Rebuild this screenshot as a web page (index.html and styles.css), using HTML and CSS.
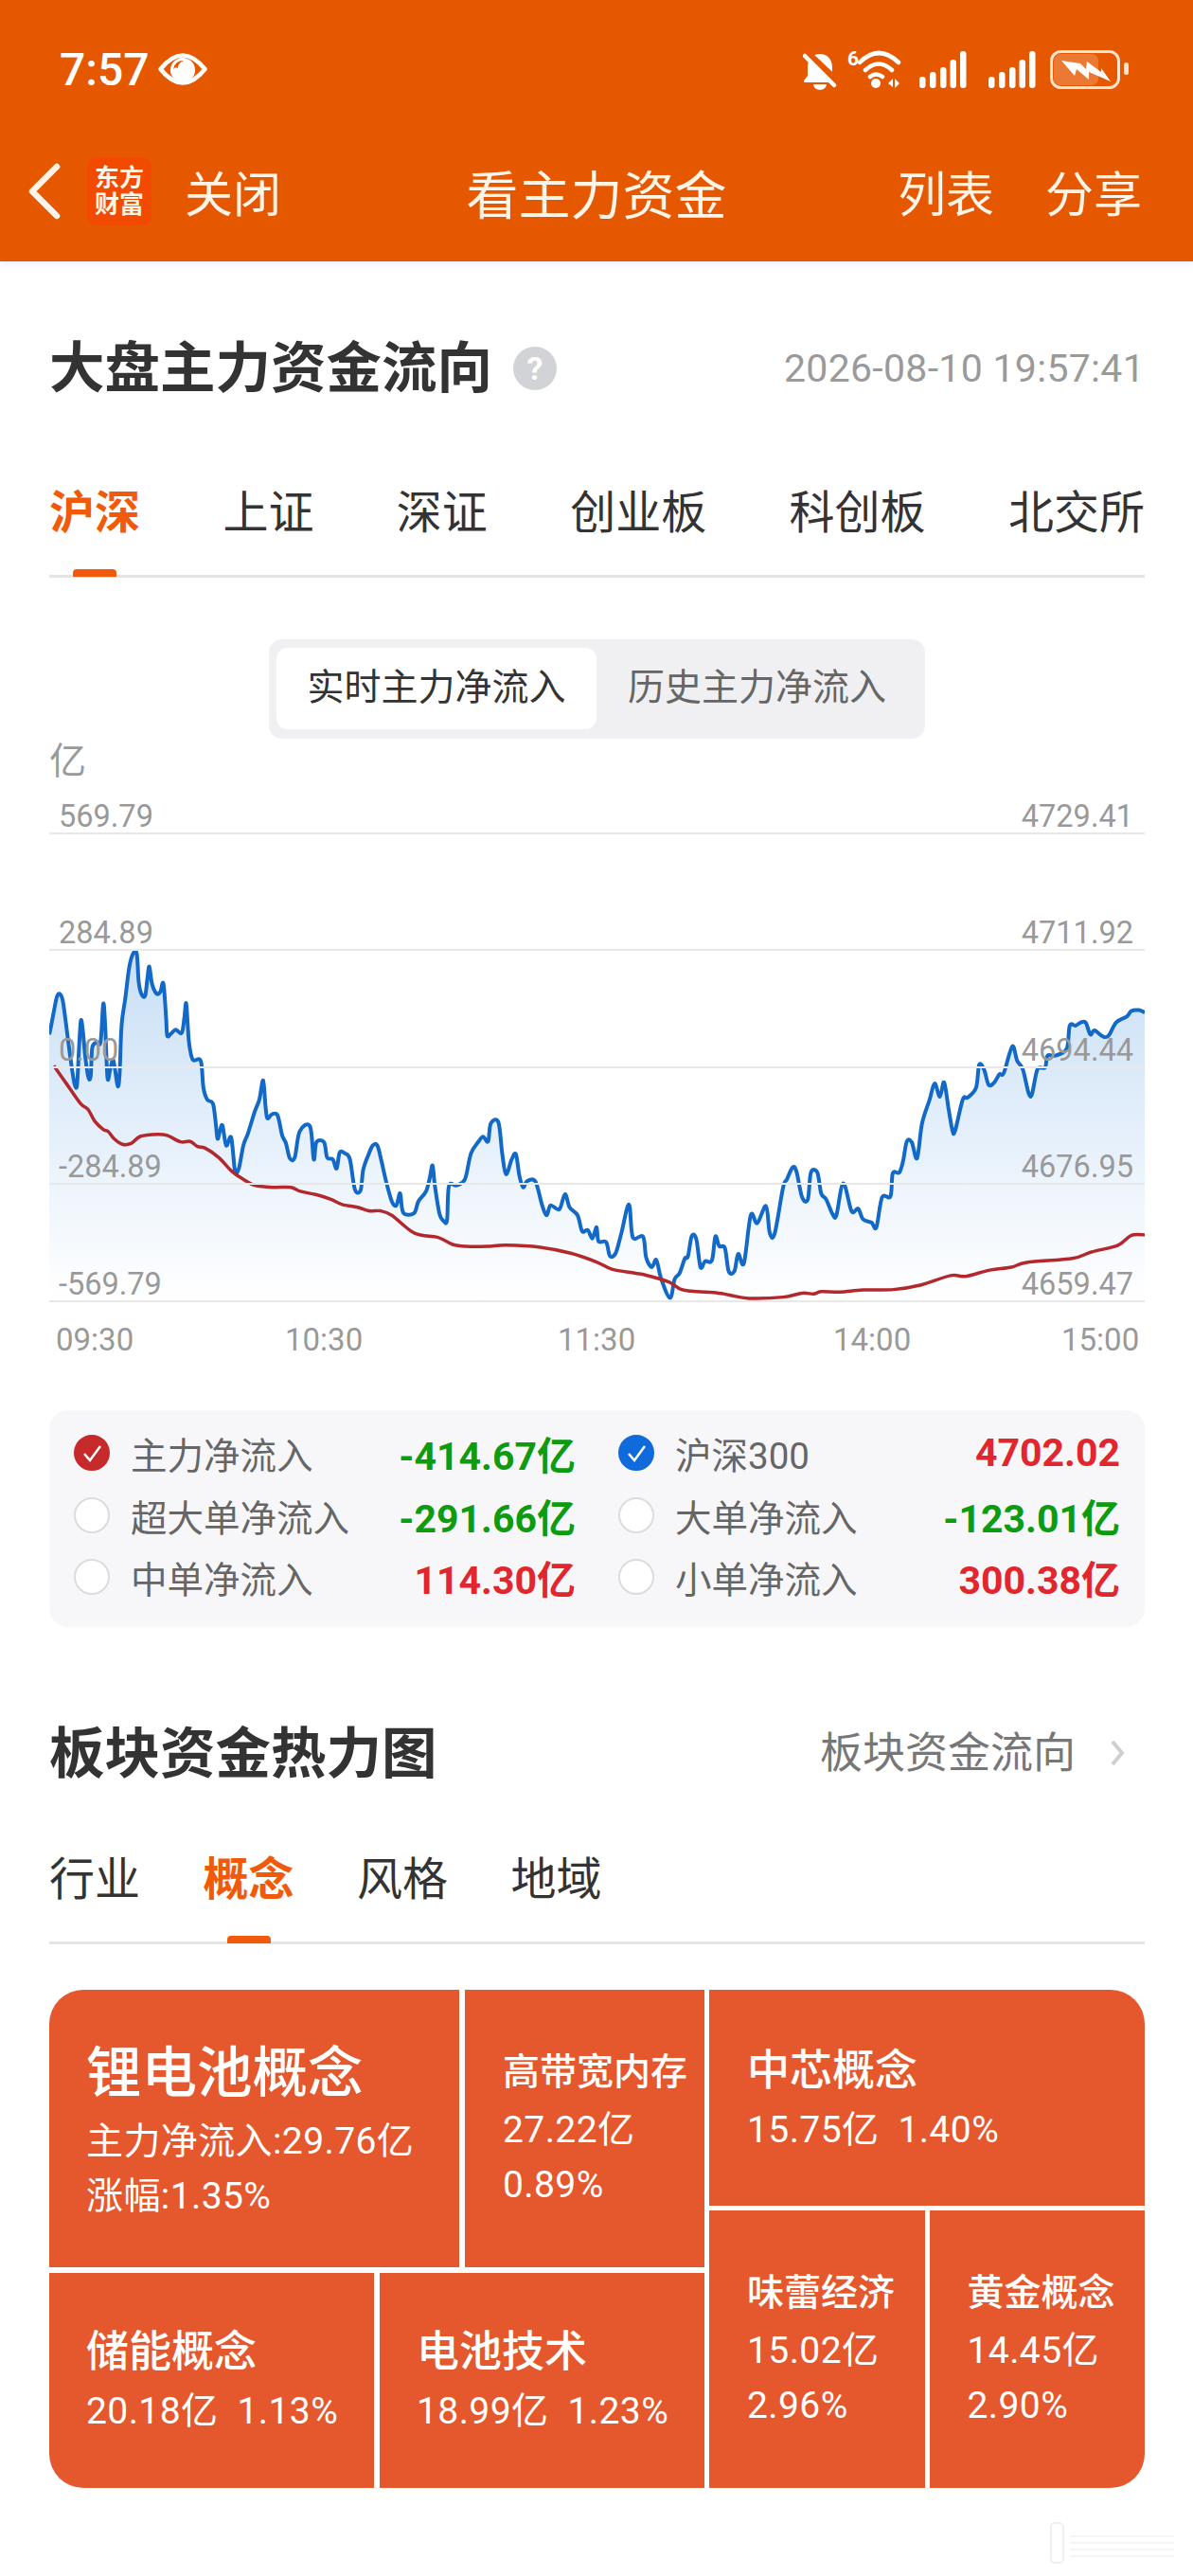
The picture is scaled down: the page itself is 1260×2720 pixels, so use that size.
FILE: index.html
```html
<!DOCTYPE html>
<html lang="zh-CN">
<head>
    <meta charset="UTF-8">
    <meta name="viewport" content="width=device-width, initial-scale=1.0">
    <title>看主力资金</title>
    <link rel="stylesheet" href="styles.css">
</head>
<body>
    <header class="header">
        <div class="status-bar">
            <span class="clock">7:57</span>
            <svg class="eye" viewBox="168 54 52 36">
                <path d="M170.500 72Q194 43 217.500 72Q194 101 170.500 72Z" fill="none" stroke="#fff" stroke-width="4.500" stroke-linejoin="round"/>
                <circle cx="194" cy="73" r="13" fill="#fff"/>
                <path d="M184 72a10 10 0 0 1 11-9c-4 2-6 4-6 8c-2-1-3-1-5 1z" fill="#e65800"/>
            </svg>
            <svg class="status-icons" viewBox="848 50 344 45">
                <path d="M866 56c-8 0-13 6-13 14v9l-4 5v2h34v-2l-4-5v-9c0-8-5-14-13-14z" fill="#fff"/>
                <path d="M859 88a7 6 0 0 0 14 0z" fill="#fff"/>
                <line x1="851" y1="54" x2="885" y2="86" stroke="#e65800" stroke-width="8"/>
                <line x1="850" y1="58" x2="881" y2="89" stroke="#fff" stroke-width="4.500" stroke-linecap="round"/>
                <text x="895" y="68" class="wifi-six">6</text>
                <path d="M908 65Q928 45 949 65M914 73Q928 60 942 73M919 80Q925 75 932 80" fill="none" stroke="#fff" stroke-width="4.500" stroke-linecap="round"/>
                <circle cx="925" cy="87" r="5" fill="#fff"/>
                <path d="M938 87l5-5v9zM945 82l5 5l-5 5z" fill="#fff"/>
                <rect x="971" y="80" width="6.500" height="12" rx="3" fill="#fff"/>
                <rect x="982" y="75" width="6.500" height="17" rx="3" fill="#fff"/>
                <rect x="993" y="70" width="6.500" height="22" rx="3" fill="#fff"/>
                <rect x="1003.500" y="62" width="6.500" height="30" rx="3" fill="#fff"/>
                <rect x="1014" y="53" width="6.500" height="39" rx="3" fill="#fff"/>
                <rect x="1044" y="80" width="6.500" height="12" rx="3" fill="#fff"/>
                <rect x="1055" y="75" width="6.500" height="17" rx="3" fill="#fff"/>
                <rect x="1066" y="70" width="6.500" height="22" rx="3" fill="#fff"/>
                <rect x="1076.500" y="62" width="6.500" height="30" rx="3" fill="#fff"/>
                <rect x="1087" y="53" width="6.500" height="39" rx="3" fill="#fff"/>
                <rect x="1113" y="56" width="47" height="33" rx="7" fill="#fff" opacity="0.2"/>
                <rect x="1110.500" y="53.500" width="71" height="38" rx="10" fill="none" stroke="#ffe3cc" stroke-width="3"/>
                <rect x="1187" y="65" width="5" height="13" rx="2.500" fill="#ffe3cc"/>
                <path d="M1121 63l20 3l6 6l1-8l15 11l0-4l10 14l-23-10l0 8l-13-11l-2 7z" fill="#fff"/>
            </svg>
        </div>
        <nav class="nav-bar">
            <div class="nav-left">
                <svg class="back" viewBox="0 0 40 64"><polyline points="33,6 7,32 33,58" fill="none" stroke="#fff4e8" stroke-width="6.500" stroke-linecap="round" stroke-linejoin="round"/></svg>
                <div class="app-logo"><span>东方</span><span>财富</span></div>
                <span>关闭</span>
            </div>
            <div class="nav-title">看主力资金</div>
            <div class="nav-right">
                <span>列表</span>
                <span>分享</span>
            </div>
        </nav>
    </header>

    <main class="page">
        <div class="section-head first">
            <div class="title-wrap">
                <h1 class="section-title">大盘主力资金流向</h1>
                <span class="help">?</span>
            </div>
            <span class="update-time">2026-08-10 19:57:41</span>
        </div>

        <div class="tabs spread">
            <span class="tab active">沪深</span>
            <span class="tab">上证</span>
            <span class="tab">深证</span>
            <span class="tab">创业板</span>
            <span class="tab">科创板</span>
            <span class="tab">北交所</span>
        </div>

        <div class="segment">
            <span class="segment-item active">实时主力净流入</span>
            <span class="segment-item">历史主力净流入</span>
        </div>

        <div class="unit">亿</div>
        <div class="chart">
            <svg id="flow-chart" class="chart-lines" viewBox="130 236 2878 1172" preserveAspectRatio="none">
                <defs>
                    <linearGradient id="area-fill" gradientUnits="userSpaceOnUse" x1="0" y1="540" x2="0" y2="1408">
                        <stop offset="0" stop-color="#c9dff6"/>
                        <stop offset="1" stop-color="#ffffff"/>
                    </linearGradient>
                </defs>
            </svg>
            <div class="chart-row top"><span>569.79</span><span>4729.41</span></div>
            <div class="chart-row"><span>284.89</span><span>4711.92</span></div>
            <div class="chart-row"><span>0.00</span><span>4694.44</span></div>
            <div class="chart-row"><span>-284.89</span><span>4676.95</span></div>
            <div class="chart-row"><span>-569.79</span><span>4659.47</span></div>
        </div>
        <div class="time-axis">
            <span>09:30</span>
            <span>10:30</span>
            <span>11:30</span>
            <span>14:00</span>
            <span>15:00</span>
        </div>

        <div class="legend">
            <div class="legend-item">
                <span class="check red"><svg viewBox="0 0 38 38"><polyline points="11,20 17,27 28,12" fill="none" stroke="#fff" stroke-width="2.500"/></svg></span>
                <span class="legend-name">主力净流入</span>
                <span class="legend-value down">-414.67亿</span>
            </div>
            <div class="legend-item">
                <span class="check blue"><svg viewBox="0 0 38 38"><polyline points="11,20 17,27 28,12" fill="none" stroke="#fff" stroke-width="2.500"/></svg></span>
                <span class="legend-name">沪深300</span>
                <span class="legend-value up">4702.02</span>
            </div>
            <div class="legend-item">
                <span class="check"></span>
                <span class="legend-name">超大单净流入</span>
                <span class="legend-value down">-291.66亿</span>
            </div>
            <div class="legend-item">
                <span class="check"></span>
                <span class="legend-name">大单净流入</span>
                <span class="legend-value down">-123.01亿</span>
            </div>
            <div class="legend-item">
                <span class="check"></span>
                <span class="legend-name">中单净流入</span>
                <span class="legend-value up">114.30亿</span>
            </div>
            <div class="legend-item">
                <span class="check"></span>
                <span class="legend-name">小单净流入</span>
                <span class="legend-value up">300.38亿</span>
            </div>
        </div>

        <div class="section-head second">
            <h2 class="section-title">板块资金热力图</h2>
            <div class="more">
                <span>板块资金流向</span>
                <svg class="more-arrow" viewBox="0 0 16 28"><polyline points="3,2 13,14 3,26" fill="none" stroke="#cfcfcf" stroke-width="4"/></svg>
            </div>
        </div>

        <div class="tabs tight">
            <span class="tab">行业</span>
            <span class="tab active">概念</span>
            <span class="tab">风格</span>
            <span class="tab">地域</span>
        </div>

        <div class="treemap">
            <div class="tree-left">
                <div class="tree-row upper">
                    <div class="tile tile-main">
                        <div class="tile-big">锂电池概念</div>
                        <div class="tile-line">主力净流入:29.76亿</div>
                        <div class="tile-line">涨幅:1.35%</div>
                    </div>
                    <div class="tile tile-narrow">
                        <div class="tile-small">高带宽内存</div>
                        <div class="tile-line">27.22亿</div>
                        <div class="tile-line">0.89%</div>
                    </div>
                </div>
                <div class="tree-row lower">
                    <div class="tile tile-wide">
                        <div class="tile-mid">储能概念</div>
                        <div class="tile-line">20.18亿&nbsp;&nbsp;1.13%</div>
                    </div>
                    <div class="tile tile-wide">
                        <div class="tile-mid">电池技术</div>
                        <div class="tile-line">18.99亿&nbsp;&nbsp;1.23%</div>
                    </div>
                </div>
            </div>
            <div class="tree-right">
                <div class="tile tile-chip">
                    <div class="tile-mid">中芯概念</div>
                    <div class="tile-line">15.75亿&nbsp;&nbsp;1.40%</div>
                </div>
                <div class="tree-row tall">
                    <div class="tile tile-half">
                        <div class="tile-small">味蕾经济</div>
                        <div class="tile-line">15.02亿</div>
                        <div class="tile-line">2.96%</div>
                    </div>
                    <div class="tile tile-half">
                        <div class="tile-small">黄金概念</div>
                        <div class="tile-line">14.45亿</div>
                        <div class="tile-line">2.90%</div>
                    </div>
                </div>
            </div>
        </div>
    </main>

    <svg class="watermark" viewBox="0 0 180 50">
        <rect x="40" y="2" width="13" height="42" rx="4" fill="none" stroke="#f0f0f0" stroke-width="2"/>
        <path d="M60 16H170M60 23H170M60 30H170M60 37H170" stroke="#f5f5f5" stroke-width="2"/>
    </svg>

    <script src="script.js"></script>
</body>
</html>
```

FILE: styles.css
```css
* {
    box-sizing: border-box;
}
body {
    font-family: Roboto, "Noto Sans CJK SC", sans-serif;
    margin: 0;
    height: 2720px;
    background-color: white;
    color: #333;
    position: relative;
    overflow: hidden;
}
.header {
    height: 276px;
    background-color: #e65800;
    color: #fff4e8;
    box-shadow: 0 4px 6px rgba(230,230,245,0.5);
}
.status-bar {
    height: 146px;
    display: flex;
    align-items: center;
    padding-left: 63px;
}
.clock {
    font-size: 48px;
    font-weight: 500;
    color: white;
}
.eye {
    width: 52px;
    height: 36px;
    margin-left: 9px;
}
.status-icons {
    width: 344px;
    height: 45px;
    margin-left: auto;
    margin-right: 68px;
}
.wifi-six {
    font-size: 21px;
    font-weight: 700;
    fill: white;
}
.nav-bar {
    height: 112px;
    display: grid;
    grid-template-columns: 1fr auto 1fr;
    align-items: center;
    font-size: 51px;
}
.nav-left {
    display: flex;
    align-items: center;
    padding-left: 27px;
}
.back {
    width: 40px;
    height: 64px;
}
.app-logo {
    width: 68px;
    height: 72px;
    margin-left: 25px;
    margin-right: 35px;
    background-color: #f24a00;
    border-radius: 10px;
    display: flex;
    flex-direction: column;
    align-items: center;
    justify-content: center;
    font-size: 26px;
    line-height: 28px;
    font-weight: 700;
}
.nav-title {
    font-size: 55px;
}
.nav-right {
    display: flex;
    justify-content: flex-end;
    gap: 54px;
    padding-right: 54px;
}
.page {
    padding: 0 51px 0 52px;
}
.section-head {
    display: flex;
    align-items: center;
    justify-content: space-between;
    height: 60px;
}
.section-head.first {
    margin-top: 83px;
}
.section-head.second {
    margin-top: 100px;
}
.section-head.second .section-title {
    padding-top: 8px;
}
.title-wrap {
    display: flex;
    align-items: center;
    gap: 22px;
}
.section-title {
    margin: 0;
    font-size: 58.500px;
    line-height: 60px;
    font-weight: 700;
}
.help {
    width: 46px;
    height: 46px;
    border-radius: 50%;
    background-color: #d2d3d6;
    color: white;
    font-size: 34px;
    font-weight: 700;
    line-height: 46px;
    text-align: center;
}
.update-time {
    font-size: 41px;
    letter-spacing: 0.3px;
    color: #9a9a9a;
}
.tabs {
    display: flex;
    border-bottom: 3px solid #e4e4e4;
    font-size: 48px;
    line-height: 48px;
}
.tabs.spread {
    justify-content: space-between;
    margin-top: 98.500px;
    padding: 0 0 41.500px;
}
.tabs.tight {
    gap: 66.500px;
    margin-top: 83.500px;
    padding-bottom: 40.500px;
}
.tab {
    position: relative;
}
.tab.active {
    color: #f05a0a;
    font-weight: 700;
}
.tab.active::after {
    content: "";
    position: absolute;
    left: 50%;
    bottom: -43.500px;
    width: 46px;
    height: 8px;
    margin-left: -23px;
    background-color: #f05a0a;
    border-radius: 4px 4px 0 0;
}
.tabs.tight .tab.active::after {
    bottom: -42.500px;
}
.segment {
    width: 693px;
    height: 105px;
    margin: 65px auto 0;
    padding: 9px 8px 10px;
    background-color: #f0f0f3;
    border-radius: 14px;
    display: flex;
}
.segment-item {
    flex: 1;
    font-size: 39px;
    line-height: 84px;
    text-align: center;
    color: #666;
    white-space: nowrap;
}
.segment-item.active {
    flex: none;
    width: 338px;
    background-color: white;
    color: #333;
    border-radius: 12px;
}
.unit {
    margin-top: 5px;
    height: 36.500px;
    font-size: 39px;
    line-height: 38px;
    color: #9a9a9a;
}
.chart {
    position: relative;
}
.chart-lines {
    position: absolute;
    left: 0;
    top: 57px;
    width: 100%;
    height: 494px;
}
.chart-row {
    position: relative;
    height: 123.500px;
    display: flex;
    align-items: flex-end;
    justify-content: space-between;
    padding: 0 12px 0 10px;
    border-bottom: 2px solid #e8e8e8;
    font-size: 32.500px;
    line-height: 34px;
    color: #999;
}
.chart-row.top {
    height: 59px;
}
.time-axis {
    display: grid;
    grid-template-columns: 242px 288px 291px 241px auto;
    padding-left: 7px;
    margin-top: 21px;
    font-size: 33px;
    line-height: 38px;
    color: #999;
}
.legend {
    margin-top: 55px;
    height: 229px;
    padding: 13px 26px 0 26px;
    background-color: #f7f7fa;
    border-radius: 20px;
    display: grid;
    grid-template-columns: 530px 530px;
    grid-auto-rows: 65.500px;
    column-gap: 45px;
}
.legend-item {
    display: flex;
    align-items: center;
    gap: 22px;
}
.check {
    width: 38px;
    height: 38px;
    border-radius: 50%;
    background-color: white;
    border: 2px solid #dcdcdc;
    flex: none;
}
.check svg {
    display: block;
    width: 38px;
    height: 38px;
    margin: -2px;
}
.check.red {
    background-color: #c62a2a;
    border-color: #c62a2a;
}
.check.blue {
    background-color: #0f6bdc;
    border-color: #0f6bdc;
}
.legend-name {
    font-size: 38.500px;
    color: #666;
}
.legend-value {
    margin-left: auto;
    font-size: 41px;
    font-weight: 700;
}
.down {
    color: #0d9b10;
}
.up {
    color: #e2262d;
}
.more {
    display: flex;
    align-items: center;
    font-size: 45px;
    color: #777;
}
.more-arrow {
    width: 16px;
    height: 28px;
    margin-left: 36px;
    margin-right: 21px;
    margin-top: 6px;
}
.treemap {
    margin-top: 48px;
    height: 526px;
    display: flex;
    gap: 5px;
    border-radius: 36px;
    overflow: hidden;
}
.tree-left {
    width: 692px;
    display: flex;
    flex-direction: column;
    gap: 6px;
}
.tree-right {
    flex: 1;
    display: flex;
    flex-direction: column;
    gap: 5px;
}
.tree-row {
    display: flex;
    gap: 6px;
}
.tree-row.upper {
    height: 293px;
}
.tree-row.lower {
    flex: 1;
}
.tree-row.tall {
    flex: 1;
    gap: 5px;
}
.tile {
    background-color: #e5582d;
    color: white;
    display: flex;
    flex-direction: column;
    justify-content: center;
    padding-left: 40px;
    white-space: nowrap;
}
.tile-main {
    width: 433px;
    padding-left: 39px;
    padding-top: 8px;
}
.tile-narrow {
    flex: 1;
    padding-top: 4px;
}
.tile-wide {
    flex: 1;
    padding-left: 39px;
    padding-top: 6px;
}
.tile-chip {
    height: 228px;
    padding-left: 40px;
    padding-top: 9px;
}
.tile-half {
    flex: 1;
    padding-top: 4px;
}
.tile-big {
    font-size: 58.500px;
    line-height: 70px;
    margin-bottom: 8px;
    font-weight: 500;
}
.tile-mid {
    font-size: 45px;
    line-height: 54px;
    font-weight: 500;
    margin-bottom: 6px;
}
.tile-small {
    font-size: 39px;
    line-height: 50px;
    font-weight: 500;
    margin-bottom: 7px;
}
.tile-line {
    font-size: 39px;
    line-height: 58px;
    letter-spacing: 0.4px;
}
.tile-wide .tile-line,
.tile-chip .tile-line {
    line-height: 59px;
}
.watermark {
    position: absolute;
    left: 1070px;
    top: 2662px;
    width: 180px;
    height: 50px;
}
```

FILE: script.js
```js
// points read off the chart, x/y in viewBox units; right half starts at x = 1568
const blueLeft = [
    [130,742],[135,720],[143,680],[150,648],[157,640],[165,655],[172,700],[180,760],[190,830],[197,868],[203,868],
    [208,780],[213,708],[218,730],[225,800],[233,850],[239,845],[243,775],[255,762],[265,760],[272,665],[277,720],
    [283,850],[290,830],[297,805],[303,830],[310,872],[315,840],[320,720],[330,650],[340,575],[350,540],[360,540],
    [365,610],[372,640],[382,645],[388,600],[393,572],[400,615],[412,640],[422,635],[430,615],[437,700],[440,745],
    [450,740],[462,730],[478,738],[485,700],[490,665],[497,760],[507,805],[528,808],[535,875],[545,905],[560,915],
    [567,960],[572,1003],[578,985],[585,970],[595,1020],[608,1000],[618,1083],[628,1078],[640,1020],[652,990],
    [670,935],[682,905],[692,857],[698,920],[703,952],[715,942],[730,945],[742,995],[752,1015],[762,1052],[775,1050],
    [788,985],[815,972],[825,1055],[832,1012],[852,1012],[860,1050],[875,1055],[885,1078],[893,1038],[907,1040],
    [920,1055],[933,1130],[948,1132],[955,1080],[970,1040],[980,1020],[992,1020],[1003,1060],[1015,1110],[1030,1160],
    [1042,1170],[1052,1140],[1060,1188],[1088,1190],[1100,1160],[1120,1135],[1130,1100],[1137,1070],[1143,1120],
    [1155,1190],[1165,1208],[1175,1208],[1180,1122],[1200,1120],[1222,1105],[1238,1040],[1258,1010],[1270,998],
    [1283,1010],[1290,965],[1310,962],[1320,1040],[1330,1092],[1345,1055],[1356,1042],[1365,1095],[1375,1125],
    [1385,1110],[1407,1110],[1425,1170],[1437,1195],[1447,1170],[1470,1180],[1485,1142],[1497,1175],[1518,1195],
    [1530,1235],[1545,1232],[1557,1253]
];
const blueRight = [
    [0,1225],[5,1260],[25,1262],[35,1297],[50,1290],[65,1240],[85,1168],[95,1250],[122,1248],[130,1300],[145,1325],
    [157,1307],[170,1355],[193,1402],[205,1355],[218,1340],[232,1303],[240,1298],[250,1247],[262,1255],[273,1325],
    [285,1310],[303,1308],[312,1248],[322,1272],[337,1277],[347,1335],[362,1335],[372,1292],[387,1315],[405,1195],
    [422,1215],[445,1172],[455,1240],[468,1240],[490,1125],[500,1105],[515,1075],[525,1085],[540,1150],[555,1155],
    [563,1088],[580,1088],[590,1140],[603,1155],[620,1192],[630,1195],[648,1115],[670,1185],[687,1178],[700,1205],
    [722,1213],[735,1225],[750,1150],[772,1148],[778,1090],[795,1088],[805,1060],[815,1010],[828,1012],[842,1052],
    [855,965],[875,905],[888,865],[902,898],[913,862],[925,930],[935,983],[942,983],[962,905],[975,900],[997,875],
    [1005,818],[1018,830],[1030,868],[1045,862],[1058,842],[1070,838],[1092,772],[1105,808],[1120,830],[1140,898],
    [1158,830],[1178,825],[1185,795],[1205,795],[1235,778],[1243,720],[1258,720],[1272,712],[1285,712],[1297,742],
    [1308,732],[1330,747],[1345,745],[1365,712],[1393,697],[1405,683],[1425,681],[1440,687]
];
const redLeft = [
    [142,820],[175,865],[212,915],[232,930],[250,960],[272,980],[285,985],[300,1003],[322,1017],[345,1015],[370,997],
    [415,992],[440,995],[475,1011],[500,1010],[520,1023],[540,1027],[575,1050],[610,1085],[640,1105],[670,1120],
    [720,1125],[765,1125],[790,1135],[830,1143],[870,1155],[900,1168],[940,1175],[970,1184],[1000,1184],[1030,1195],
    [1090,1240],[1150,1250],[1190,1268],[1225,1273],[1280,1273],[1330,1270],[1420,1275],[1500,1290]
];
const redRight = [
    [0,1312],[40,1330],[100,1340],[130,1345],[190,1362],[220,1380],[250,1385],[320,1390],[350,1395],[400,1403],
    [490,1400],[540,1390],[570,1392],[590,1386],[640,1387],[700,1382],[780,1381],[850,1370],[930,1346],[970,1348],
    [1030,1333],[1090,1325],[1130,1313],[1250,1303],[1300,1287],[1370,1270],[1405,1245],[1440,1244]
];

function joinHalves(left, right) {
    return left.concat(right.map(p => [p[0] + 1568, p[1]]));
}

// catmull-rom through the points so the line has no sharp corners
function smoothPath(pts) {
    let d = `M${pts[0][0]},${pts[0][1]}`;
    for (let i = 0; i < pts.length - 1; i++) {
        const p0 = pts[i - 1] || pts[i];
        const p1 = pts[i];
        const p2 = pts[i + 1];
        const p3 = pts[i + 2] || p2;
        const c1x = p1[0] + (p2[0] - p0[0]) / 6;
        const c1y = p1[1] + (p2[1] - p0[1]) / 6;
        const c2x = p2[0] - (p3[0] - p1[0]) / 6;
        const c2y = p2[1] - (p3[1] - p1[1]) / 6;
        d += `C${c1x},${c1y} ${c2x},${c2y} ${p2[0]},${p2[1]}`;
    }
    return d;
}

function addPath(svg, d, attrs) {
    const path = document.createElementNS('http://www.w3.org/2000/svg', 'path');
    path.setAttribute('d', d);
    Object.keys(attrs).forEach(k => path.setAttribute(k, attrs[k]));
    svg.appendChild(path);
}

const svg = document.getElementById('flow-chart');
const blue = joinHalves(blueLeft, blueRight);
const red = joinHalves(redLeft, redRight);
const blueLine = smoothPath(blue);

addPath(svg, `${blueLine}L3008,1408L130,1408Z`, { fill: 'url(#area-fill)' });
addPath(svg, blueLine, {
    fill: 'none', stroke: '#1269c7', 'stroke-width': 4, 'stroke-linejoin': 'round',
    'vector-effect': 'non-scaling-stroke'
});
addPath(svg, smoothPath(red), {
    fill: 'none', stroke: '#b3282d', 'stroke-width': 3.5, 'stroke-linejoin': 'round',
    'vector-effect': 'non-scaling-stroke'
});
```
